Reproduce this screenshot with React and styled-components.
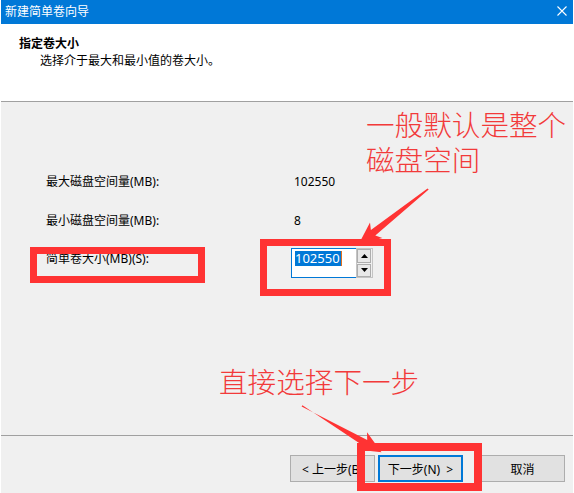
import React from 'react'
import styled, { createGlobalStyle } from 'styled-components'

const GlobalStyle = createGlobalStyle`
    html, body {
        margin: 0;
        padding: 0;
        background: #ffffff;
        overflow: hidden;
    }
    * {
        box-sizing: border-box;
    }
`

export default function App() {
    return (
        <>
            <GlobalStyle />
            <Window>
                <TitleBar>
                    <TitleText>新建简单卷向导</TitleText>
                    <CloseIcon viewBox='0 0 10 10'>
                        <path d='M0.5 0.5 L9.5 9.5 M9.5 0.5 L0.5 9.5' />
                    </CloseIcon>
                </TitleBar>
                <Header>
                    <HeaderTitle>指定卷大小</HeaderTitle>
                    <HeaderSub>选择介于最大和最小值的卷大小。</HeaderSub>
                </Header>
                <Body>
                    <Row>
                        <Label>最大磁盘空间量(MB):</Label>
                        <Value>102550</Value>
                    </Row>
                    <Row $gap={23}>
                        <Label>最小磁盘空间量(MB):</Label>
                        <Value>8</Value>
                    </Row>
                    <Row $gap={19}>
                        <Label $offset={3}>简单卷大小(MB)(S):</Label>
                        <SpinBox>
                            <SpinInput>
                                <Selected>102550</Selected>
                                <Caret />
                            </SpinInput>
                            <SpinButtons>
                                <SpinButton>
                                    <Arrow viewBox='0 0 7 4'>
                                        <path d='M3.5 0 L7 4 L0 4 Z' />
                                    </Arrow>
                                </SpinButton>
                                <SpinButton>
                                    <Arrow viewBox='0 0 7 4'>
                                        <path d='M0 0 L7 0 L3.5 4 Z' />
                                    </Arrow>
                                </SpinButton>
                            </SpinButtons>
                        </SpinBox>
                    </Row>
                </Body>
                <Footer>
                    <Button>&lt; 上一步(B)</Button>
                    <Button $primary>下一步(N)&nbsp; &gt;</Button>
                    <Button $space={17}>取消</Button>
                </Footer>

                {/* annotations drawn over the dialog */}
                <Note $left={366} $top={106}>
                    <NoteLine>一般默认是整个</NoteLine>
                    <NoteLine>磁盘空间</NoteLine>
                </Note>
                <Note $left={219} $top={363}>
                    <NoteLine>直接选择下一步</NoteLine>
                </Note>
                <ArrowLayer viewBox='0 0 574 493'>
                    <polygon points='428.7,189.6 375.3,235.5 382.4,238.1 358.5,244.5 370,222.5 370.9,230.1 427.5,188.6' />
                    <polygon points='302.4,405.3 363.6,445.9 357,449.5 381.5,452.3 367,432.3 367.2,439.9 301.6,406.6' />
                </ArrowLayer>
                <Mark $left={30} $top={247} $w={175} $h={36} />
                <Mark $left={260} $top={239} $w={131} $h={57} />
                <Mark $left={357} $top={443} $w={125} $h={48} $thick={8} />
            </Window>
        </>
    )
}

const uiFont = `"Noto Sans", "Noto Sans CJK SC", sans-serif`

const Window = styled.div`
    position: relative;
    width: 574px;
    height: 493px;
    padding: 0 1px;
    display: flex;
    flex-direction: column;
    background: #ffffff;
    font-family: ${uiFont};
    font-size: 12px;
    color: #000000;
`
const TitleBar = styled.div`
    height: 24px;
    flex-shrink: 0;
    background: #0078d7;
    display: flex;
    align-items: center;
    justify-content: space-between;
    padding: 0 6px 1px 4px;
`
const TitleText = styled.span`
    color: #ffffff;
    font-size: 12px;
    line-height: 16px;
`
const CloseIcon = styled.svg`
    width: 10px;
    height: 10px;
    margin-bottom: 2px;
    path {
        stroke: #ffffff;
        stroke-width: 1.1;
        fill: none;
    }
`
const Header = styled.div`
    height: 78px;
    flex-shrink: 0;
    background: #ffffff;
    border-bottom: 1px solid #a0a0a0;
    padding: 12px 0 0 18px;
`
const HeaderTitle = styled.div`
    font-weight: bold;
    line-height: 16px;
`
const HeaderSub = styled.div`
    line-height: 16px;
    margin-top: 1px;
    padding-left: 21px;
`
const Body = styled.div`
    flex: 1;
    background: #f0f0f0;
    border-bottom: 1px solid #a0a0a0;
    padding: 72px 0 0 45px;
`
const Row = styled.div`
    display: flex;
    align-items: flex-start;
    margin-top: ${p => p.$gap || 0}px;
`
const Label = styled.div`
    width: 245px;
    line-height: 16px;
    margin-top: ${p => p.$offset || 0}px;
`
const Value = styled.div`
    padding-left: 3px;
    line-height: 16px;
`
const SpinBox = styled.div`
    display: flex;
    height: 30px;
`
const SpinInput = styled.div`
    width: 65px;
    height: 30px;
    background: #ffffff;
    border: 1px solid #0078d7;
    border-right: none;
    padding: 2px 0 0 3px;
    display: flex;
    align-items: flex-start;
`
const Selected = styled.span`
    background: #0078d7;
    color: #ffffff;
    font-size: 13px;
    line-height: 15px;
    padding: 0 1px 0 0;
`
const Caret = styled.span`
    width: 1px;
    height: 15px;
    background: #e07020;
`
const SpinButtons = styled.div`
    width: 17px;
    height: 30px;
    border: 1px solid #c4c4c4;
    background: #f0f0f0;
    display: flex;
    flex-direction: column;
    gap: 1px;
    padding: 0 1px 0 0;
`
const SpinButton = styled.div`
    flex: 1;
    border: 1px solid #adadad;
    background: #e8e8e8;
    display: flex;
    align-items: center;
    justify-content: center;
`
const Arrow = styled.svg`
    width: 7px;
    height: 4px;
    path {
        fill: #000000;
    }
`
const Footer = styled.div`
    height: 57px;
    flex-shrink: 0;
    background: #f0f0f0;
    display: flex;
    justify-content: flex-end;
    align-items: flex-start;
    gap: 3px;
    padding: 19px 8px 0 0;
`
const Button = styled.div`
    width: 85px;
    height: 27px;
    margin-left: ${p => p.$space ? p.$space - 3 : 0}px;
    background: #e1e1e1;
    border: ${p => p.$primary ? '2px solid #0078d7' : '1px solid #adadad'};
    display: flex;
    align-items: center;
    justify-content: center;
    font-size: 12px;
    white-space: nowrap;
`
const Note = styled.div`
    position: absolute;
    left: ${p => p.$left}px;
    top: ${p => p.$top}px;
    font-family: "Noto Sans CJK SC", sans-serif;
    font-weight: 300;
    font-size: 28.6px;
    color: #f23a3a;
    white-space: nowrap;
`
const NoteLine = styled.div`
    height: 35px;
    line-height: 35px;
`
const ArrowLayer = styled.svg`
    position: absolute;
    left: 0;
    top: 0;
    width: 574px;
    height: 493px;
    pointer-events: none;
    polygon {
        fill: #ff3333;
    }
`
const Mark = styled.div`
    position: absolute;
    left: ${p => p.$left}px;
    top: ${p => p.$top}px;
    width: ${p => p.$w}px;
    height: ${p => p.$h}px;
    border: ${p => p.$thick || 7}px solid #ff3333;
`
